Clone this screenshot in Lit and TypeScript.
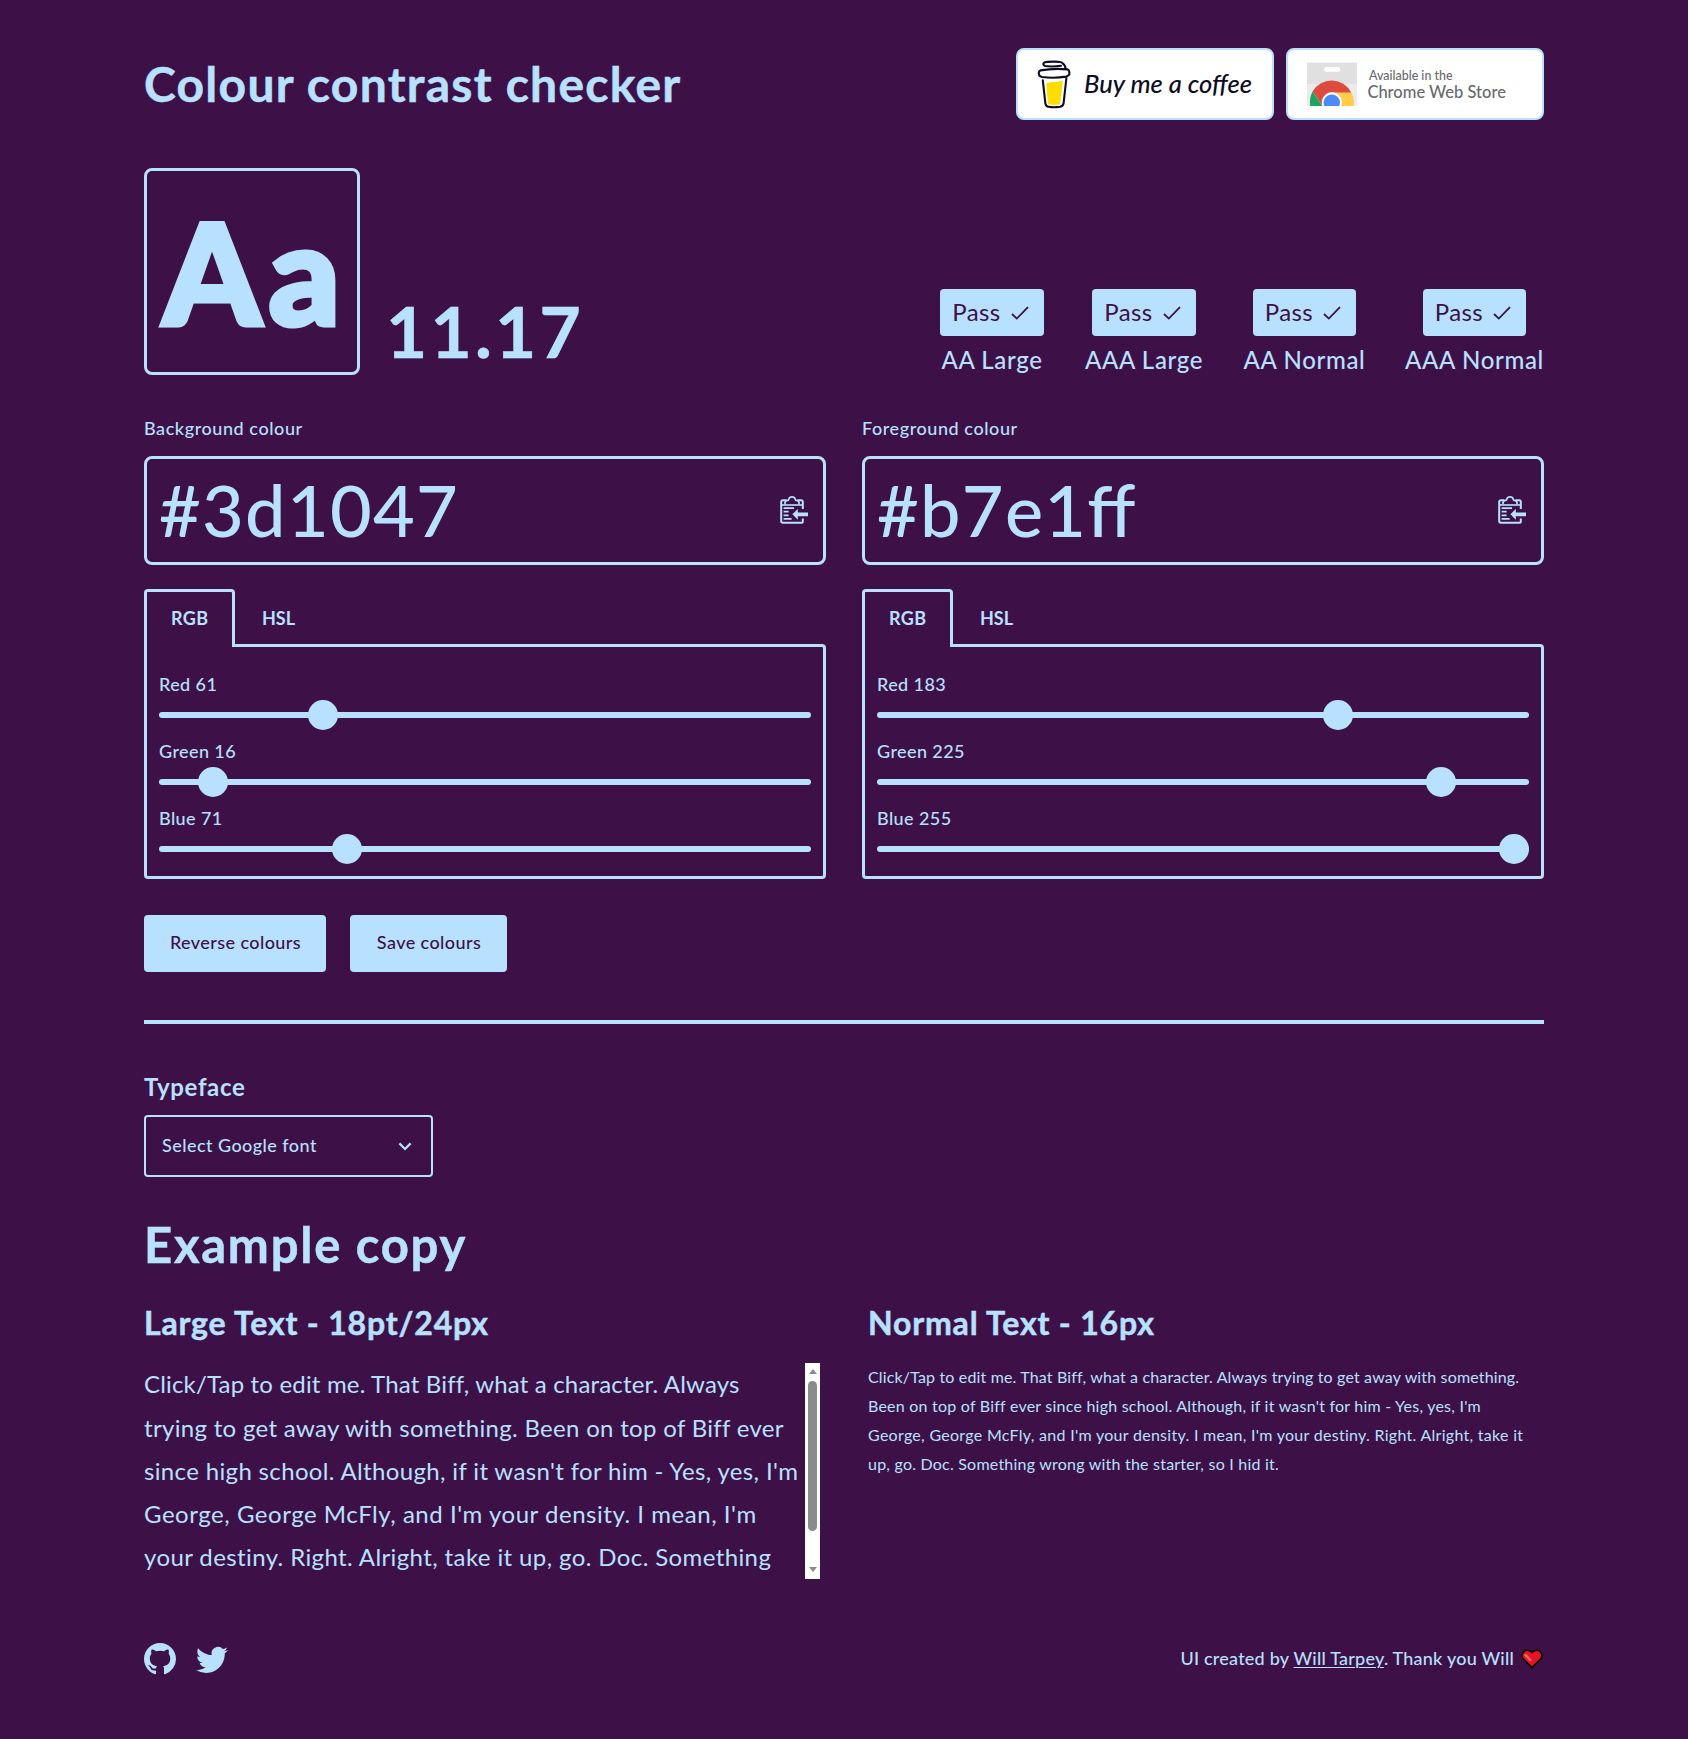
import { LitElement, html, svg, css } from "lit";
import { customElement, property } from "lit/decorators.js";

const clipboardIcon = svg`
  <path d="M22.8 13V5.8Q22.8 4.2 21.2 4.2H17.4M6.6 4.2H3Q1.2 4.2 1.2 6V25Q1.2 26.8 2.8 26.8H21.2Q22.8 26.8 22.8 25.2V22.4" fill="none" stroke="currentColor" stroke-width="2"/>
  <path d="M5 8.4V6.6Q5 5 6.8 4.6Q8.8 4.4 9 2.8Q9.4 .9 12 .9T15 2.8Q15.2 4.4 17.2 4.6Q19 5 19 6.6V8.4" fill="none" stroke="currentColor" stroke-width="1.7"/>
  <path d="M1 9H23" stroke="currentColor" stroke-width="1.6"/>
  <path d="M3.6 12.2H14M3.6 15.7H8.6M3.6 19.3H8.6M3.6 22.9H11.6" stroke="currentColor" stroke-width="1.7"/>
  <path d="M12.4 18.3L17.8 12.9V16.4H28V20.2H17.8V23.7Z" fill="currentColor"/>`;

@customElement("colour-slider")
class ColourSlider extends LitElement {
  @property() label = "";
  @property({ type: Number }) value = 0;

  static styles = css`
    :host { display: block; }
    .label { font-size: 18px; line-height: 18px; font-weight: 500; letter-spacing: 0.4px; margin-bottom: 7px; }
    .range { height: 30px; display: flex; align-items: center; position: relative; }
    .track { flex: 1; height: 6px; border-radius: 3px; background: #b7e1ff; }
    .thumb { position: absolute; top: 0; width: 30px; height: 30px; border-radius: 50%; background: #b7e1ff; }
  `;

  render() {
    const ratio = this.value / 255;
    return html`
      <div class="label">${this.label} ${this.value}</div>
      <div class="range">
        <div class="track"></div>
        <div class="thumb" style="left: calc((100% - 30px) * ${ratio})"></div>
      </div>`;
  }
}

@customElement("colour-picker")
class ColourPicker extends LitElement {
  @property() label = "";
  @property() value = "#000000";

  static styles = css`
    :host { display: block; }
    .label { font-size: 18px; line-height: 18px; font-weight: 500; letter-spacing: 0.57px; margin-bottom: 19px; }
    .field {
      box-sizing: border-box; height: 109px; border: 3px solid #b7e1ff; border-radius: 8px;
      display: flex; align-items: center; justify-content: space-between;
      padding: 0 15px 0 12px; margin-bottom: 24px;
    }
    .hex {
      font-size: 72px; line-height: 72px; font-weight: 500; letter-spacing: 1.3px; padding-bottom: 4px;
      font-feature-settings: "liga" 1;
    }
    .field svg { width: 28px; height: 28px; display: block; margin-bottom: 1px; }
    .tabs { display: flex; height: 55px; }
    .tab {
      box-sizing: border-box; height: 58px; border: 3px solid transparent; border-bottom: 0;
      border-radius: 4px 4px 0 0; padding: 17px 24px 0; width: 91px; white-space: nowrap;
      font-size: 18px; line-height: 18px; font-weight: 700;
    }
    .rgb { position: relative; border-color: #b7e1ff; background: #3d1047; z-index: 1; letter-spacing: 0.4px; }
    .panel {
      border: 3px solid #b7e1ff; border-radius: 0 4px 4px 4px; padding: 28px 12px 12px;
      display: grid; gap: 12px;
    }
  `;

  render() {
    const channels = ["Red", "Green", "Blue"].map((name, i) => ({
      name,
      level: parseInt(this.value.slice(1 + i * 2, 3 + i * 2), 16),
    }));
    return html`
      <div class="label">${this.label}</div>
      <div class="field">
        <span class="hex">${this.value}</span>
        <svg viewBox="0 0 28 28">${clipboardIcon}</svg>
      </div>
      <div class="tabs">
        <div class="tab rgb">RGB</div>
        <div class="tab">HSL</div>
      </div>
      <div class="panel">
        ${channels.map((c) => html`<colour-slider .label=${c.name} .value=${c.level}></colour-slider>`)}
      </div>`;
  }
}

const LARGE_COPY = [
  "Click/Tap to edit me. That Biff, what a character. Always",
  "trying to get away with something. Been on top of Biff ever",
  "since high school. Although, if it wasn't for him - Yes, yes, I'm",
  "George, George McFly, and I'm your density. I mean, I'm",
  "your destiny. Right. Alright, take it up, go. Doc. Something",
];

const NORMAL_COPY = [
  "Click/Tap to edit me. That Biff, what a character. Always trying to get away with something.",
  "Been on top of Biff ever since high school. Although, if it wasn't for him - Yes, yes, I'm",
  "George, George McFly, and I'm your density. I mean, I'm your destiny. Right. Alright, take it",
  "up, go. Doc. Something wrong with the starter, so I hid it.",
];

@customElement("app-root")
class AppRoot extends LitElement {
  static styles = css`
    :host {
      display: block; box-sizing: border-box; min-height: 1739px; padding: 48px 144px 64px;
      background: #3d1047; color: #b7e1ff; font-family: Lato, "Open Sans", sans-serif;
    }
    h1, h2, h3, p { margin: 0; }
    svg { display: block; }
    h1, h2, h3 { font-weight: 700; -webkit-text-stroke: 0.5px #b7e1ff; }
    header { display: flex; align-items: center; height: 72px; margin-bottom: 48px; }
    h1 { flex: 1; font-size: 48px; line-height: 48px; padding-bottom: 1px; letter-spacing: 1.27px; }
    .promos { display: flex; gap: 12px; }
    .promo {
      box-sizing: border-box; width: 258px; height: 72px; background: #fff;
      border: 2px solid #b7e1ff; border-radius: 8px;
    }
    .promo svg { width: 254px; height: 68px; }
    .script { font: italic 500 24px Lato, sans-serif; }
    .store { font-family: Lato, sans-serif; font-weight: 500; fill: #67696d; }

    .hero { display: flex; align-items: flex-end; height: 207px; margin-bottom: 44px; }
    .sample {
      box-sizing: border-box; width: 216px; height: 207px; border: 3px solid #b7e1ff; border-radius: 8px;
      display: flex; justify-content: center; font-size: 139px; line-height: 201px; font-weight: 900;
      letter-spacing: 8px; padding-left: 7px; -webkit-text-stroke: 5px #b7e1ff;
    }
    .ratio {
      font-size: 71px; line-height: 72px; font-weight: 700; letter-spacing: 3.3px;
      padding: 0 0 8px 26px; flex: 1; -webkit-text-stroke: 0.6px #b7e1ff;
    }
    .grades { display: grid; grid-template-columns: 104px 120px 121px 139px; column-gap: 40px; padding-bottom: 3px; }
    .grade { display: flex; flex-direction: column; align-items: center; }
    .pass {
      box-sizing: border-box; width: 103.5px; height: 47px; margin-bottom: 12px; border-radius: 4px;
      background: #b7e1ff; color: #3d1047; display: flex; align-items: center; justify-content: space-between;
      padding: 0 15px 1px 12px; font-size: 24px; line-height: 24px; letter-spacing: 0.4px;
    }
    .pass svg { width: 18px; height: 14px; margin-top: 2px; }
    .level { font-size: 24px; line-height: 24px; font-weight: 500; letter-spacing: 0.66px; white-space: nowrap; }

    .pickers { display: grid; grid-template-columns: 1fr 1fr; gap: 36px; margin-bottom: 36px; }
    .actions { display: flex; gap: 24px; padding-bottom: 48px; border-bottom: 4px solid #b7e1ff; margin-bottom: 52px; }
    .button {
      box-sizing: border-box; height: 57px; width: 182px; border-radius: 4px; background: #b7e1ff; color: #3d1047;
      display: flex; align-items: center; justify-content: center; padding: 0 0 3px 1px;
      font-size: 18px; line-height: 18px; font-weight: 500; letter-spacing: 0.42px;
    }
    .save { width: 157px; }

    .typeface {
      font-size: 24px; line-height: 24px; font-weight: 700; letter-spacing: 0.65px; margin-bottom: 16px;
      margin-top: -1px;
    }
    .select {
      box-sizing: border-box; width: 289px; height: 62px; border: 2px solid #b7e1ff; border-radius: 4px;
      display: flex; align-items: center; justify-content: space-between; padding: 0 19px 2px 16px;
      font-size: 18px; line-height: 18px; font-weight: 500; letter-spacing: 0.45px; margin-bottom: 43px;
    }
    .select svg { width: 14px; height: 9px; margin-top: 2px; }

    h2 { font-size: 49px; line-height: 48px; letter-spacing: 1.75px; margin-bottom: 39px; }
    .copy { display: grid; grid-template-columns: 1fr 1fr; gap: 48px; margin-bottom: 64px; }
    h3 { font-size: 32px; line-height: 32px; letter-spacing: 0.83px; margin-bottom: 24px; }
    .scroller { display: flex; height: 216px; overflow: hidden; }
    .line { display: block; white-space: nowrap; }
    .large { flex: 1; font-size: 24px; line-height: 43.2px; margin-top: -0.6px; }
    .large .line:nth-child(1) { letter-spacing: 0.17px; }
    .large .line:nth-child(2) { letter-spacing: 0.31px; }
    .large .line:nth-child(3) { letter-spacing: 0.35px; }
    .large .line:nth-child(4) { letter-spacing: 0.53px; }
    .large .line:nth-child(5) { letter-spacing: 0.39px; }
    .normal { font-size: 16px; line-height: 29px; margin-top: -1px; }
    .normal .line:nth-child(1) { letter-spacing: 0.155px; }
    .normal .line:nth-child(2) { letter-spacing: 0.225px; }
    .normal .line:nth-child(3) { letter-spacing: 0.285px; }
    .normal .line:nth-child(4) { letter-spacing: 0.22px; }
    .scrollbar {
      box-sizing: border-box; width: 15px; background: #fff; padding: 6px 0 7px;
      display: flex; flex-direction: column; align-items: center;
    }
    .up, .down { width: 0; height: 0; border: 4.5px solid transparent; }
    .up { border-bottom: 5px solid #8b8b8b; border-top: 0; }
    .down { border-top: 5px solid #8b8b8b; border-bottom: 0; margin-top: auto; }
    .grip { width: 9px; height: 150px; margin-top: 7px; border-radius: 4.5px; background: #8b8b8b; }

    footer { display: flex; align-items: center; height: 32px; }
    .github { width: 32px; height: 32px; }
    .twitter { margin-left: 20px; flex: 1; padding-top: 1px; }
    .twitter svg { width: 32px; height: 32px; }
    .credit { font-size: 18px; line-height: 18px; font-weight: 500; letter-spacing: 0.22px; padding-bottom: 2px; }
    .credit a { color: inherit; text-decoration: underline; text-underline-offset: 1.5px; text-decoration-thickness: 1px; }
    .heart { width: 22px; height: 20px; margin: 0 1px 1px 7px; }
  `;

  private promos() {
    return html`
      <div class="promos">
        <div class="promo">
          <svg viewBox="2 2 254 68">
            <path d="M30.2 35.6Q34 33.6 38 34T46.8 32.6L44.2 56.2Q38 57.6 32 56.2Z" fill="#fd0"/>
            <g fill="none" stroke="#0d0c22" stroke-width="2.1" stroke-linecap="round" stroke-linejoin="round">
              <path d="M45 17.8Q36 19 29 18Q26.4 17 27.8 14.8Q29.6 13.6 38 13.6T46.4 15.2Q49.4 17 49.6 21"/>
              <path d="M24.4 22.4Q38 20 51.6 21.4Q53.6 22.2 53.4 26Q53 28 50.4 28.6Q38 30.6 26 29Q22.4 28.4 22.8 24.4Q23 22.8 24.4 22.4Z"/>
              <path d="M26.8 32.4L29.4 55.6Q29.8 58.4 32.6 58.8Q38 59.8 44.2 58.8Q47.2 58.2 47.6 55.2L50.4 30"/>
            </g>
            <text class="script" x="68" y="45" textLength="168" lengthAdjust="spacingAndGlyphs" fill="#0d0c22">Buy me a coffee</text>
          </svg>
        </div>
        <div class="promo">
          <svg viewBox="2 2 254 68">
            <path d="M21 14.7H71V56.5Q71 58 69.5 58H22.5Q21 58 21 56.5Z" fill="#ebebeb"/>
            <path d="M21 14.7H71V36H21Z" fill="#e0e0e0"/>
            <rect x="38" y="19" width="16.3" height="4.8" rx="2.4" fill="#fff"/>
            <path d="M26.6 43.6A22 22 0 0 1 65.4 44.7H46L36.6 58Z" fill="#dd4b3e"/>
            <path d="M26.6 43.6A22 22 0 0 0 24.2 58H36.6L35.4 56.4Z" fill="#1da462"/>
            <path d="M46 44.7H65.4A22 22 0 0 1 67.6 58H50Z" fill="#ffcd46"/>
            <path d="M36.5 58A10 10 0 1 1 55.1 58Z" fill="#fff"/>
            <path d="M38.3 58A8.2 8.2 0 1 1 53.3 58Z" fill="#4c8bf5"/>
            <text class="store" x="83" y="31.6" font-size="12.6" textLength="83.5" lengthAdjust="spacingAndGlyphs">Available in the</text>
            <text class="store" x="81.4" y="50" font-size="17.2" textLength="138.5" lengthAdjust="spacingAndGlyphs">Chrome Web Store</text>
          </svg>
        </div>
      </div>`;
  }

  render() {
    return html`
      <header>
        <h1>Colour contrast checker</h1>
        ${this.promos()}
      </header>

      <section class="hero">
        <div class="sample">Aa</div>
        <div class="ratio">11.17</div>
        <div class="grades">
          ${["AA Large", "AAA Large", "AA Normal", "AAA Normal"].map((level) => html`
            <div class="grade">
              <div class="pass">Pass
                <svg viewBox="0 0 18 14"><path d="M1 8L5.8 12.6L17 1.2" fill="none" stroke="currentColor" stroke-width="1.8"/></svg>
              </div>
              <div class="level">${level}</div>
            </div>`)}
        </div>
      </section>

      <section class="pickers">
        <colour-picker label="Background colour" value="#3d1047"></colour-picker>
        <colour-picker label="Foreground colour" value="#b7e1ff"></colour-picker>
      </section>

      <div class="actions">
        <div class="button">Reverse colours</div>
        <div class="button save">Save colours</div>
      </div>

      <div class="typeface">Typeface</div>
      <div class="select">Select Google font
        <svg viewBox="0 0 14 9"><path d="M1.4 1.4L7 7L12.6 1.4" fill="none" stroke="currentColor" stroke-width="2.2"/></svg>
      </div>

      <h2>Example copy</h2>
      <section class="copy">
        <div>
          <h3>Large Text - 18pt/24px</h3>
          <div class="scroller">
            <p class="large">${LARGE_COPY.map((l) => html`<span class="line">${l}</span>`)}</p>
            <div class="scrollbar"><div class="up"></div><div class="grip"></div><div class="down"></div></div>
          </div>
        </div>
        <div>
          <h3>Normal Text - 16px</h3>
          <p class="normal">${NORMAL_COPY.map((l) => html`<span class="line">${l}</span>`)}</p>
        </div>
      </section>

      <footer>
        <svg class="github" viewBox="0 0 16 16" fill="currentColor"><path d="M8 0C3.58 0 0 3.58 0 8c0 3.54 2.29 6.53 5.47 7.59.4.07.55-.17.55-.38 0-.19-.01-.82-.01-1.49-2.01.37-2.53-.49-2.69-.94-.09-.23-.48-.94-.82-1.13-.28-.15-.68-.52-.01-.53.63-.01 1.08.58 1.23.82.72 1.21 1.87.87 2.33.66.07-.52.28-.87.51-1.07-1.78-.2-3.64-.89-3.64-3.95 0-.87.31-1.59.82-2.15-.08-.2-.36-1.02.08-2.12 0 0 .67-.21 2.2.82.64-.18 1.32-.27 2-.27s1.36.09 2 .27c1.53-1.04 2.2-.82 2.2-.82.44 1.1.16 1.92.08 2.12.51.56.82 1.27.82 2.15 0 3.07-1.87 3.75-3.65 3.95.29.25.54.73.54 1.48 0 1.07-.01 1.93-.01 2.2 0 .21.15.46.55.38A8.01 8.01 0 0 0 16 8c0-4.42-3.58-8-8-8z"/></svg>
        <div class="twitter"><svg viewBox="0 0 24 24" fill="currentColor"><path d="M23.953 4.57a10 10 0 01-2.825.775 4.958 4.958 0 002.163-2.723c-.951.555-2.005.959-3.127 1.184a4.92 4.92 0 00-8.384 4.482C7.69 8.095 4.067 6.13 1.64 3.162a4.822 4.822 0 00-.666 2.475c0 1.71.87 3.213 2.188 4.096a4.904 4.904 0 01-2.228-.616v.06a4.923 4.923 0 003.946 4.827 4.996 4.996 0 01-2.212.085 4.936 4.936 0 004.604 3.417 9.867 9.867 0 01-6.102 2.105c-.39 0-.779-.023-1.17-.067a13.995 13.995 0 007.557 2.209c9.053 0 13.998-7.496 13.998-13.985 0-.21 0-.42-.015-.63A9.935 9.935 0 0024 4.59z"/></svg></div>
        <div class="credit">UI created by <a>Will Tarpey</a>. Thank you Will</div>
        <svg class="heart" viewBox="0 0 22 20">
          <path d="M11 18.6L2.4 10Q.8 8 1.2 5.4Q2 1.8 5.8 1.2Q9 1 11 3.4Q13 1 16.2 1.2Q20 1.8 20.8 5.4Q21.2 8 19.6 10Z" fill="#e81224" stroke="#000" stroke-width="1.6" stroke-linejoin="round"/>
          <path d="M4.6 6.2L9.4 11.2" stroke="#f4666f" stroke-width="2.4" stroke-linecap="round"/>
        </svg>
      </footer>`;
  }
}
